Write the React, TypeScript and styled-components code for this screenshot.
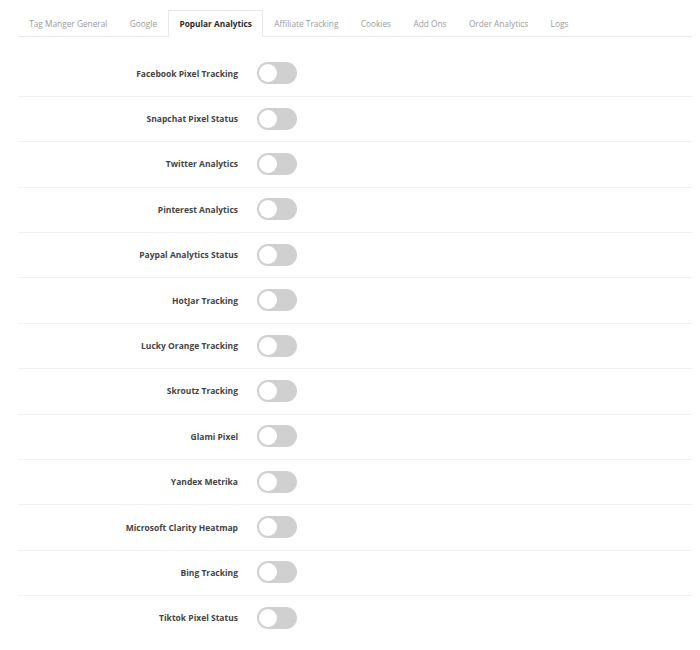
import React, { useState } from "react";
import styled, { createGlobalStyle } from "styled-components";

const Global = createGlobalStyle`
  html, body { margin: 0; padding: 0; background: #ffffff; }
  body { font-family: "Open Sans", "Liberation Sans", sans-serif; }
`;

const Page = styled.div`
  padding: 10px 8px 0 18px;
  width: 700px;
  box-sizing: border-box;
`;

const TabBar = styled.nav`
  display: flex;
  align-items: flex-end;
  border-bottom: 1px solid #e8e8e8;
  height: 26px;
`;

const Tab = styled.button<{ $active?: boolean }>`
  font-family: "Open Sans", "Liberation Sans", sans-serif;
  font-size: 8.3px;
  font-weight: ${(p) => (p.$active ? 700 : 400)};
  color: ${(p) => (p.$active ? "#2b2b2b" : "#9a9a9a")};
  background: #ffffff;
  height: ${(p) => (p.$active ? "27px" : "26px")};
  margin-bottom: ${(p) => (p.$active ? "-1px" : "0")};
  padding: 0 10.2px 0 10.2px;
  border: 1px solid ${(p) => (p.$active ? "#e8e8e8" : "transparent")};
  border-bottom: none;
  cursor: pointer;
  line-height: 24px;
  white-space: nowrap;
`;

const Table = styled.div`
  padding-top: 14.5px;
`;

const Row = styled.div<{ $last?: boolean }>`
  display: grid;
  grid-template-columns: 220px 40px;
  column-gap: 19px;
  align-items: center;
  height: 45.4px;
  box-sizing: border-box;
  border-bottom: 1px solid ${(p) => (p.$last ? "transparent" : "#f0f0f0")};
  padding-bottom: 1px;
`;

const Label = styled.label`
  text-align: right;
  font-size: 8.5px;
  font-weight: 700;
  color: #444;
`;

const Switch = styled.button<{ $on?: boolean }>`
  position: relative;
  width: 40px;
  height: 22px;
  border-radius: 11px;
  border: none;
  padding: 0;
  background: ${(p) => (p.$on ? "#2196f3" : "#d0d0d0")};
  cursor: pointer;
`;

const Knob = styled.span<{ $on?: boolean }>`
  position: absolute;
  top: 2px;
  left: ${(p) => (p.$on ? "20px" : "2px")};
  width: 18px;
  height: 18px;
  border-radius: 50%;
  background: #ffffff;
`;

const tabs = [
  "Tag Manger General",
  "Google",
  "Popular Analytics",
  "Affiliate Tracking",
  "Cookies",
  "Add Ons",
  "Order Analytics",
  "Logs",
];

const settings = [
  "Facebook Pixel Tracking",
  "Snapchat Pixel Status",
  "Twitter Analytics",
  "Pinterest Analytics",
  "Paypal Analytics Status",
  "HotJar Tracking",
  "Lucky Orange Tracking",
  "Skroutz Tracking",
  "Glami Pixel",
  "Yandex Metrika",
  "Microsoft Clarity Heatmap",
  "Bing Tracking",
  "Tiktok Pixel Status",
];

export default function App() {
  const [active, setActive] = useState(2);
  const [on, setOn] = useState<boolean[]>(settings.map(() => false));
  return (
    <Page>
      <Global />
      <TabBar>
        {tabs.map((t, i) => (
          <Tab key={t} $active={i === active} onClick={() => setActive(i)}>
            {t}
          </Tab>
        ))}
      </TabBar>
      <Table>
        {settings.map((s, i) => (
          <Row key={s} $last={i === settings.length - 1}>
            <Label>{s}</Label>
            <Switch
              $on={on[i]}
              aria-label={s}
              onClick={() => setOn((o) => o.map((v, j) => (j === i ? !v : v)))}
            >
              <Knob $on={on[i]} />
            </Switch>
          </Row>
        ))}
      </Table>
    </Page>
  );
}
